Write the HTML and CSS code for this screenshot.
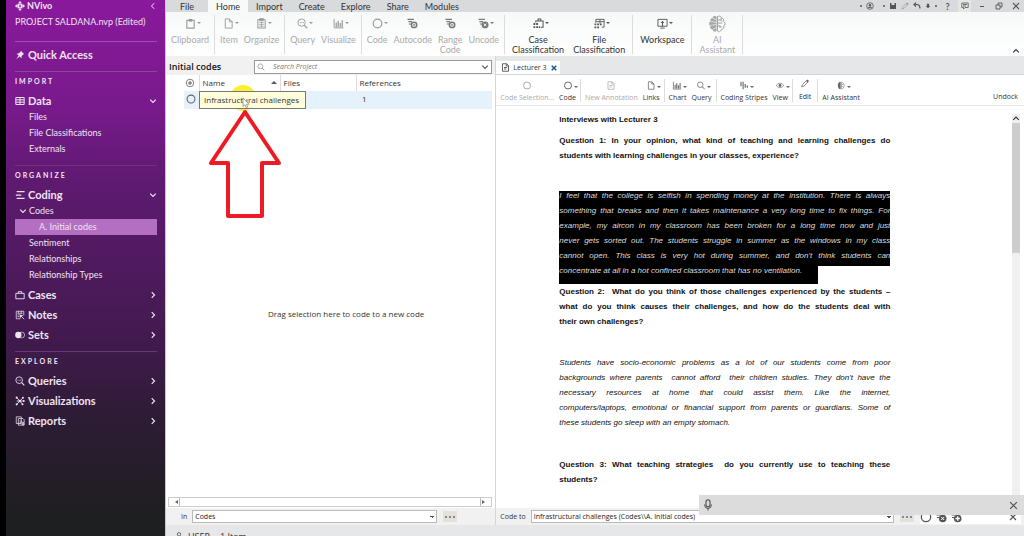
FILE: index.html
```html
<!DOCTYPE html>
<html lang="en">
<head>
<meta charset="utf-8">
<title>NVivo - PROJECT SALDANA</title>
<link rel="stylesheet" href="styles.css">
</head>
<body>
<svg class="defs" aria-hidden="true">
  <symbol id="logo" viewBox="0 0 12 12"><path d="M6 1v3.4M6 7.600V11M1 6h3.400M7.600 6H11M3.200 3.200l5.600 5.600M8.800 3.200L3.200 8.800" stroke="currentColor" stroke-width="1.600"/><path d="M6 0l2 2.300H4zM6 12l2-2.300H4zM0 6l2.300-2v4zM12 6L9.700 4v4z" fill="currentColor"/><circle cx="6" cy="6" r="1.100" fill="#86199a"/></symbol>
  <symbol id="pin" viewBox="0 0 12 12"><path d="M7 1l4 4-1.300.5L8 7.300 7.700 10 5.400 7.800 1.500 11 4.300 6.700 2 4.400 4.800 4 6.500 2.300z" fill="currentColor"/></symbol>
  <symbol id="data" viewBox="0 0 12 12"><path d="M1 1.800h10v8.400H1zM1 4.600h10M1 7.400h10M6 1.800v8.400" fill="none" stroke="currentColor" stroke-width="1.200"/></symbol>
  <symbol id="coding" viewBox="0 0 12 12"><path d="M2 2h9.500M1 6h6.500M2 10h9.500" stroke="currentColor" stroke-width="1.500"/></symbol>
  <symbol id="case" viewBox="0 0 12 12"><path d="M1 4h10v6.500H1zM4 4V2h4v2" fill="none" stroke="currentColor" stroke-width="1.100"/></symbol>
  <symbol id="notes" viewBox="0 0 12 12"><path d="M1.500 1.500h9v5M1.500 1.500v9h5M3 4h6M3 6h4M3 8h2.500M4 1v3M7.500 1v3" fill="none" stroke="currentColor" stroke-width=".9"/><path d="M7 7l4 4M6.500 9V6.500H9z" stroke="currentColor" fill="currentColor"/></symbol>
  <symbol id="sets" viewBox="0 0 12 12"><circle cx="4" cy="6" r="3.800" fill="currentColor"/><circle cx="8" cy="6" r="3.500" fill="none" stroke="currentColor" stroke-width=".8"/></symbol>
  <symbol id="search" viewBox="0 0 12 12"><circle cx="5" cy="5" r="3.700" fill="none" stroke="currentColor"/><path d="M7.700 7.700L11 11" stroke="currentColor" stroke-width="1.300"/></symbol>
  <symbol id="queries" viewBox="0 0 12 12"><circle cx="5" cy="5" r="4" fill="none" stroke="currentColor"/><path d="M8 8l3.200 3.200" stroke="currentColor" stroke-width="1.300"/><path d="M3 5h1M4.700 5h1M6.400 5h1" stroke="currentColor"/></symbol>
  <symbol id="viz" viewBox="0 0 12 12"><path d="M2 2l4 4 3.500-4M6 6l-4 4M6 6h4.500M6 6l3 4M2 6h3" stroke="currentColor" fill="none"/><g fill="currentColor"><circle cx="2" cy="2" r="1.300"/><circle cx="9.500" cy="2" r="1.200"/><circle cx="2" cy="10" r="1.300"/><circle cx="10.500" cy="6" r="1.200"/><circle cx="9" cy="10" r="1.200"/><circle cx="5.800" cy="6" r="1.500"/></g></symbol>
  <symbol id="reports" viewBox="0 0 12 12"><path d="M1.500 1h6v8h-6zM4 3h5.500l1.500 1.500V11H4zM5.500 6h3M5.500 8h2" fill="none" stroke="currentColor" stroke-width=".9"/><path d="M8 7h3v4H8z" fill="currentColor" opacity=".7"/></symbol>
  <symbol id="down" viewBox="0 0 8 8"><path d="M1.200 2.700L4 5.500l2.800-2.800" fill="none" stroke="currentColor" stroke-width="1.200"/></symbol>
  <symbol id="right" viewBox="0 0 8 8"><path d="M2.700 1.200L5.500 4 2.700 6.800" fill="none" stroke="currentColor" stroke-width="1.200"/></symbol>
  <symbol id="left" viewBox="0 0 8 8"><path d="M5.200 1.200L2.500 4l2.700 2.800" fill="none" stroke="currentColor"/></symbol>
  <symbol id="up" viewBox="0 0 8 8"><path d="M1.200 5.300L4 2.500l2.800 2.800" fill="none" stroke="currentColor" stroke-width="1.200"/></symbol>
  <symbol id="clip" viewBox="0 0 12 12"><path d="M2 2.500h8v8.500H2z" fill="none" stroke="currentColor" stroke-width="1.200"/><path d="M4 1h4v3H4z" fill="currentColor"/></symbol>
  <symbol id="page" viewBox="0 0 12 12"><path d="M2.500 1h4.500l3 3v7H2.500zM7 1v3h3" fill="none" stroke="currentColor"/></symbol>
  <symbol id="organize" viewBox="0 0 12 12"><path d="M2 2h8v9H2z" fill="none" stroke="currentColor" stroke-width="1.100"/><path d="M4 .6h4V3H4zM3.500 5h5M3.500 7h5M3.500 9h5M6 4v6" fill="currentColor" stroke="currentColor" stroke-width=".8"/></symbol>
  <symbol id="chart" viewBox="0 0 12 12"><path d="M1.200 1v9.800H11.500" fill="none" stroke="currentColor"/><path d="M3.500 5v5M5.700 3v7M7.900 5.500V10M10.100 2.500V10" stroke="currentColor" stroke-width="1.400"/></symbol>
  <symbol id="ring" viewBox="0 0 12 12"><circle cx="6" cy="6" r="4.700" fill="none" stroke="currentColor" stroke-width="1.300"/></symbol>
  <symbol id="ringdot" viewBox="0 0 12 12"><circle cx="6" cy="6" r="4.500" fill="none" stroke="currentColor"/><path d="M6 3.500v5M3.500 6h5" stroke="currentColor" stroke-width="1.400"/></symbol>
  <symbol id="autocode" viewBox="0 0 12 12"><path d="M.5 1.500h7M1.500 4h4M2 6.500h2.500" stroke="currentColor" stroke-width="1.200"/><circle cx="7.700" cy="7.500" r="2.900" fill="none" stroke="currentColor" stroke-width="1.700"/><path d="M7 6l2.200 1.500L7 9z" fill="currentColor"/></symbol>
  <symbol id="uncode" viewBox="0 0 12 12"><path d="M.5 1.500h7M1.500 4h4M2 6.500h2.500" stroke="currentColor" stroke-width="1.200"/><circle cx="7.700" cy="7.500" r="3.800" fill="currentColor"/><path d="M6.200 6l3 3M9.200 6l-3 3" stroke="#fff"/></symbol>
  <symbol id="addcode" viewBox="0 0 12 12"><path d="M.5 1.500h7M1.500 4h4M2 6.500h2.500" stroke="currentColor" stroke-width="1.200"/><circle cx="7.700" cy="7.500" r="3.800" fill="currentColor"/><path d="M7.700 5.300v4.400M5.500 7.500h4.400" stroke="#fff" stroke-width="1.300"/></symbol>
  <symbol id="casecls" viewBox="0 0 12 12"><path d="M3 5V3.200h8V10H8.500M5.500 3V1.200h3V3" fill="none" stroke="currentColor" stroke-width="1.100"/><path d="M.5 5.500h2v2h-2zM3.500 5.500h2v2h-2zM.5 9h2v2h-2zM3.500 9h2v2h-2zM6.300 9h1.500v2H6.300z" fill="currentColor"/></symbol>
  <symbol id="filecls" viewBox="0 0 12 12"><path d="M2 5V1.500h9V10H8.500M2 4h9M6.500 1.500V6" fill="none" stroke="currentColor"/><path d="M.5 6h2v2h-2zM3.500 6h2v2h-2zM6.400 6h2v2h-2zM.5 9.200h2v2h-2zM3.500 9.200h2v2h-2z" fill="currentColor"/></symbol>
  <symbol id="workspace" viewBox="0 0 12 12"><path d="M1 1.500h10v7.500H1zM3.500 11h5" fill="none" stroke="currentColor"/><path d="M6 3l2 2.500H6.600V9H5.400V5.500H4z" fill="currentColor"/></symbol>
  <symbol id="brain" viewBox="0 0 18 18"><path d="M8.500 1.500C6 .3 4.800 1.500 4.500 3 2.500 3.300 2 5 2.500 6.300.6 7.500.6 10 2.200 11 1.800 13 3 14.500 4.600 14.500 5.300 17 7.600 17.300 8.500 16z" fill="currentColor" opacity=".85"/><path d="M2.500 6.500l6 1M2 10.500l6.500-1M4.500 3l4 2M4.600 14.500l4-2" stroke="#fff" stroke-width=".6"/><path d="M9.500 1.500c2.500-1.200 3.700 0 4 1.500 2 .3 2.500 2 2 3.300 1.900 1.200 1.900 3.700.3 4.700.4 2-.8 3.500-2.400 3.500-.7 2.500-3 2.800-3.900 1.500zM9.500 5h3l1.500 1.500M9.500 8h5M9.500 11h3l1.500 1.500M13 3v2.500M12 13v-2" fill="none" stroke="currentColor" stroke-width=".9"/></symbol>
  <symbol id="doc" viewBox="0 0 12 12"><path d="M2 1h5.500L10 3.500V11H2zM7 1v3h3M4 6h4M4 8h3" fill="none" stroke="currentColor"/></symbol>
  <symbol id="stripes" viewBox="0 0 12 12"><path d="M2 1v6M4.800 1v10M7.600 4v5M10.400 6v3" stroke="currentColor" stroke-width="1.500"/></symbol>
  <symbol id="eye" viewBox="0 0 12 12"><path d="M.8 6Q6-.5 11.200 6 6 12 .8 6z" fill="none" stroke="currentColor" stroke-width=".8"/><circle cx="6" cy="6" r="1.900" fill="currentColor"/></symbol>
  <symbol id="pencil" viewBox="0 0 12 12"><path d="M1.500 10.500l1-3L8 2l2 2-5.500 5.500z" fill="none" stroke="currentColor"/><path d="M7.500 2.500L9.300.7l2 2L9.500 4.500z" fill="currentColor"/></symbol>
  <symbol id="ai" viewBox="0 0 12 12"><path d="M5.500 1C.5 1 .5 11 5.500 11z" fill="currentColor"/><path d="M6.500 1.500c5 0 5 9 0 9zM6.500 4.500H9M6.500 7.500H9" fill="none" stroke="currentColor" stroke-width=".7"/></symbol>
  <symbol id="close" viewBox="0 0 8 8"><path d="M1 1l6 6M7 1L1 7" stroke="currentColor" stroke-width="1.100"/></symbol>
  <symbol id="closebold" viewBox="0 0 8 8"><path d="M1 1l6 6M7 1L1 7" stroke="currentColor" stroke-width="2"/></symbol>
  <symbol id="save" viewBox="0 0 8 8"><path d="M1 1h6v6H1z" fill="currentColor"/><path d="M2.500 1h3v2h-3z" fill="#d9dadc"/></symbol>
  <symbol id="undo" viewBox="0 0 8 8"><path d="M1 2.500h3.500Q7 3 7 6.500M3 .6L1 2.500l2 2" fill="none" stroke="currentColor" stroke-width="1.200"/></symbol>
  <symbol id="arrowdown" viewBox="0 0 8 8"><path d="M2.500 1h3v3H7L4 7 1 4h1.500z" fill="currentColor"/></symbol>
  <symbol id="user" viewBox="0 0 8 8"><circle cx="4" cy="4" r="3.300" fill="none" stroke="currentColor" stroke-width=".8"/><circle cx="4" cy="3.200" r="1.200" fill="currentColor"/><path d="M2 6q2-2 4 0" fill="none" stroke="currentColor"/></symbol>
  <symbol id="comment" viewBox="0 0 8 8"><path d="M.8 1h6.400v4.500H4L2.500 7V5.500H.8zM2 2.500h4M2 4h3" fill="none" stroke="currentColor" stroke-width=".8"/></symbol>
  <symbol id="min" viewBox="0 0 8 8"><path d="M2 4.500h4" stroke="currentColor"/></symbol>
  <symbol id="restore" viewBox="0 0 8 8"><path d="M1 3h4v4H1zM3 3V1h4v4H5" fill="none" stroke="currentColor" stroke-width=".9"/></symbol>
  <symbol id="mic" viewBox="0 0 12 12"><rect x="4" y=".8" width="4" height="7" rx="2" fill="none" stroke="currentColor" stroke-width="1.200"/><path d="M2.500 5.500Q2.500 9.500 6 9.500t3.500-4M6 9.500v2" fill="none" stroke="currentColor"/></symbol>
  <symbol id="person" viewBox="0 0 12 12"><circle cx="6" cy="3.500" r="2.600" fill="none" stroke="currentColor"/><path d="M1.500 12q0-5 4.500-5t4.500 5" fill="none" stroke="currentColor"/></symbol>
</svg>

<div class="app">
  <nav class="sidebar">
    <div class="brand"><svg><use href="#logo"/></svg><span>NVivo</span><button class="collapse" aria-label="Collapse"><svg><use href="#left"/></svg></button></div>
    <div class="project">PROJECT SALDANA.nvp (Edited)</div>
    <a class="head quick" href="#quick"><svg><use href="#pin"/></svg><span>Quick Access</span></a>

    <section>
      <h2>IMPORT</h2>
      <div class="group">
        <a class="head" href="#data"><svg><use href="#data"/></svg><span>Data</span><svg class="chev"><use href="#down"/></svg></a>
        <a class="sub" href="#files">Files</a>
        <a class="sub" href="#fileclass">File Classifications</a>
        <a class="sub" href="#externals">Externals</a>
      </div>
    </section>
    <section>
      <h2>ORGANIZE</h2>
      <div class="group">
        <a class="head" href="#coding"><svg><use href="#coding"/></svg><span>Coding</span><svg class="chev"><use href="#down"/></svg></a>
        <a class="sub open" href="#codes"><svg><use href="#down"/></svg>Codes</a>
        <a class="sub current" href="#initial">A. Initial codes</a>
        <a class="sub" href="#sentiment">Sentiment</a>
        <a class="sub" href="#relationships">Relationships</a>
        <a class="sub" href="#reltypes">Relationship Types</a>
      </div>
      <div class="group"><a class="head" href="#cases"><svg><use href="#case"/></svg><span>Cases</span><svg class="chev"><use href="#right"/></svg></a></div>
      <div class="group"><a class="head" href="#notes"><svg><use href="#notes"/></svg><span>Notes</span><svg class="chev"><use href="#right"/></svg></a></div>
      <div class="group"><a class="head" href="#sets"><svg><use href="#sets"/></svg><span>Sets</span><svg class="chev"><use href="#right"/></svg></a></div>
    </section>
    <section>
      <h2>EXPLORE</h2>
      <div class="group"><a class="head" href="#queries"><svg><use href="#queries"/></svg><span>Queries</span><svg class="chev"><use href="#right"/></svg></a></div>
      <div class="group"><a class="head" href="#viz"><svg><use href="#viz"/></svg><span>Visualizations</span><svg class="chev"><use href="#right"/></svg></a></div>
      <div class="group"><a class="head" href="#reports"><svg><use href="#reports"/></svg><span>Reports</span><svg class="chev"><use href="#right"/></svg></a></div>
    </section>
  </nav>

  <main class="main">
    <header class="tabs">
      <button class="file">File</button><button class="active">Home</button><button>Import</button><button>Create</button><button>Explore</button><button>Share</button><button>Modules</button>
      <div class="window">
        <i class="dot"></i><svg><use href="#user"/></svg><i class="dot wide"></i><svg><use href="#save"/></svg><svg class="faint"><use href="#pencil"/></svg><svg><use href="#undo"/></svg><svg class="slim"><use href="#arrowdown"/></svg><i class="dot"></i>
        <button class="help" aria-label="Help">?</button><button class="note" aria-label="Feedback"><svg><use href="#comment"/></svg></button><button aria-label="Minimize"><svg><use href="#min"/></svg></button><button aria-label="Restore"><svg><use href="#restore"/></svg></button><button aria-label="Close"><svg><use href="#close"/></svg></button>
      </div>
    </header>

    <div class="ribbon">
      <div class="rgroup"><button class="off"><span class="ic drop"><svg><use href="#clip"/></svg></span>Clipboard</button></div>
      <div class="rgroup"><button class="off"><span class="ic drop"><svg><use href="#page"/></svg></span>Item</button><button class="off"><span class="ic drop"><svg><use href="#organize"/></svg></span>Organize</button></div>
      <div class="rgroup"><button class="off"><span class="ic drop"><svg><use href="#queries"/></svg></span>Query</button><button class="off"><span class="ic drop"><svg><use href="#chart"/></svg></span>Visualize</button></div>
      <div class="rgroup"><button class="off"><span class="ic drop"><svg><use href="#ring"/></svg></span>Code</button><button class="off dim"><span class="ic"><svg><use href="#autocode"/></svg></span>Autocode</button><button class="off dim"><span class="ic"><svg><use href="#autocode"/></svg></span>Range<br>Code</button><button class="off dim"><span class="ic drop"><svg><use href="#uncode"/></svg></span>Uncode</button></div>
      <div class="rgroup roomy"><button><span class="ic drop"><svg><use href="#casecls"/></svg></span>Case<br>Classification</button><button><span class="ic drop"><svg><use href="#filecls"/></svg></span>File<br>Classification</button></div>
      <div class="rgroup roomy"><button><span class="ic drop"><svg><use href="#workspace"/></svg></span>Workspace</button></div>
      <div class="rgroup roomy"><button class="off"><span class="ic big"><svg><use href="#brain"/></svg></span>AI<br>Assistant</button></div>
      <button class="fold" aria-label="Collapse ribbon"><svg><use href="#up"/></svg></button>
    </div>

    <div class="panes">
      <section class="list">
        <div class="listhead">
          <h1>Initial codes</h1>
          <div class="search"><svg><use href="#search"/></svg><input type="text" aria-label="Search Project" placeholder="Search Project"><svg class="open-list"><use href="#down"/></svg></div>
        </div>
        <div class="listbody">
          <table>
            <colgroup><col class="c1"><col class="c2"><col class="c3"><col></colgroup>
            <thead><tr><th><svg><use href="#ringdot"/></svg></th><th><span class="sort">Name</span></th><th>Files</th><th>References</th></tr></thead>
            <tbody><tr><td><svg><use href="#ring"/></svg></td><td class="cell"><span class="halo"></span><span class="tip">Infrastructural challenges</span><svg class="cursor" viewBox="0 0 8 12"><path d="M1 1v8.500l2-1.800 1.200 3 1.500-.7-1.200-2.800H7z" fill="#fff" stroke="#888" stroke-width=".8"/></svg></td><td></td><td class="num">1</td></tr></tbody>
          </table>
          <svg class="pointer" viewBox="0 0 74 110"><path d="M37 3L3 54H20V107H54V54H71z" fill="none" stroke="#ed1c24" stroke-width="4" stroke-linejoin="round"/></svg>
          <p class="hint">Drag selection here to code to a new code</p>
        </div>
        <div class="hscroll"><i class="prev"></i><span></span><i class="next"></i></div>
        <div class="codebar"><label for="in">In</label><select id="in"><option>Codes</option></select><button class="more" aria-label="Browse"><i></i><i></i><i></i></button></div>
      </section>

      <section class="detail">
        <div class="doctabs"><button class="doctab"><svg><use href="#doc"/></svg><span>Lecturer 3</span><svg class="x"><use href="#closebold"/></svg></button></div>
        <div class="tools">
          <div class="tgroup"><button class="off"><span class="ic"><svg><use href="#ring"/></svg></span>Code Selection...</button><button><span class="ic drop"><svg><use href="#ring"/></svg></span>Code</button></div>
          <div class="tgroup"><button class="off"><span class="ic"><svg><use href="#doc"/></svg></span>New Annotation</button><button><span class="ic drop"><svg><use href="#page"/></svg></span>Links</button></div>
          <div class="tgroup"><button><span class="ic drop"><svg><use href="#chart"/></svg></span>Chart</button><button><span class="ic drop"><svg><use href="#search"/></svg></span>Query</button></div>
          <div class="tgroup"><button><span class="ic drop"><svg><use href="#stripes"/></svg></span>Coding Stripes</button><button><span class="ic drop"><svg><use href="#eye"/></svg></span>View</button></div>
          <div class="tgroup edit"><button><span class="ic"><svg><use href="#pencil"/></svg></span>Edit</button></div>
          <div class="tgroup"><button><span class="ic drop"><svg><use href="#ai"/></svg></span>AI Assistant</button></div>
          <button class="undock">Undock</button>
        </div>
        <div class="reader">
          <article class="doc">
            <p class="q title">Interviews with Lecturer 3</p>
            <p class="q"><span class="ln">Question 1: In your opinion, what kind of teaching and learning challenges do</span> <span>students with learning challenges in your classes, experience?</span></p>
            <p class="a picked"><span class="ln">I feel that the college is selfish in spending money at the institution. There is always</span> <span class="ln">something that breaks and then it takes maintenance a very long time to fix things. For</span> <span class="ln">example, my aircon in my classroom has been broken for a long time now and just</span> <span class="ln">never gets sorted out. The students struggle in summer as the windows in my class</span> <span class="ln">cannot open. This class is very hot during summer, and don't think students can</span> <span class="end">concentrate at all in a hot confined classroom that has no ventilation.</span></p>
            <p class="q"><span class="ln">Question 2:&nbsp; What do you think of those challenges experienced by the students –</span> <span class="ln">what do you think causes their challenges, and how do the students deal with</span> <span>their own challenges?</span></p>
            <p class="a"><span class="ln">Students have socio-economic problems as a lot of our students come from poor</span> <span class="ln">backgrounds where parents&nbsp; cannot afford&nbsp; their children studies. They don't have the</span> <span class="ln">necessary resources at home that could assist them. Like the internet,</span> <span class="ln">computers/laptops, emotional or financial support from parents or guardians. Some of</span> <span>these students go sleep with an empty stomach.</span></p>
            <p class="q"><span class="ln">Question 3: What teaching strategies&nbsp; do you currently use to teaching these</span> <span>students?</span></p>
          </article>
          <div class="vscroll"><svg><use href="#up"/></svg><i></i><svg class="bottom"><use href="#down"/></svg></div>
        </div>
        <div class="codebar right"><label for="codeto">Code to</label><select id="codeto"><option>Infrastructural challenges (Codes\\A. Initial codes)</option></select><button class="more" aria-label="Browse codes"><i></i><i></i><i></i></button><div class="acts"><button aria-label="Code"><svg><use href="#ring"/></svg></button><button aria-label="Uncode"><svg><use href="#uncode"/></svg></button><button aria-label="Add code"><svg><use href="#addcode"/></svg></button><button class="end" aria-label="Close code bar"><svg><use href="#close"/></svg></button></div></div>
      </section>
    </div>
    <footer class="status"><svg><use href="#person"/></svg><span>USER</span><span>1 Item</span></footer>
  </main>
  <div class="voice"><svg><use href="#mic"/></svg><button aria-label="Dismiss"><svg><use href="#close"/></svg></button></div>
</div>
</body>
</html>
```
FILE: styles.css
```css
* { box-sizing: border-box; }
body { margin: 0; font-family: Lato, sans-serif; font-size: 9px; color: #333; background: #000; }
h1, h2, p { margin: 0; }
button { margin: 0; padding: 0; border: 0; background: none; font: inherit; color: inherit; }
a { color: inherit; text-decoration: none; }
svg { display: block; flex: none; }
.defs { position: absolute; width: 0; height: 0; }
.app { position: relative; display: flex; height: 100vh; padding-left: 6px; overflow: hidden; }

/* Navigation */
.sidebar { flex: none; width: 160px; padding: 0 8px 0 9px; border-right: 1px solid #cfc3d3; color: #efe3f2; background: linear-gradient(#8a199c, #781a8b 20%, #5e1a70 34%, #431a50 62%, #2d1c34 78%, #1e1f20 96%); }
.brand { display: flex; align-items: center; height: 12px; gap: 2px; font-weight: 700; line-height: 12px; }
.brand svg { width: 10px; height: 10px; }
.collapse { margin-left: auto; }
.brand .collapse svg { width: 8px; height: 8px; }
.project { height: 30px; line-height: 20px; white-space: nowrap; border-bottom: 1px solid #a04db0; margin-bottom: 5px; }
.head { display: flex; align-items: center; gap: 3px; height: 16px; font-size: 11px; font-weight: 700; line-height: 16px; }
.head svg { width: 10px; height: 10px; }
.head .chev { width: 8px; height: 8px; margin-left: auto; }
.quick { margin-bottom: 8px; }
.sidebar section { border-top: 1px solid #8a489a; padding: 4px 0 6px; }
.sidebar section + section { border-color: #6b3579; }
.sidebar h2 { margin-bottom: 5px; font-size: 7px; line-height: 10px; font-weight: 700; letter-spacing: 2px; }
.group { padding: 2px 0; }
.sub { display: block; height: 16px; padding-left: 14px; line-height: 16px; }
.open { display: flex; align-items: center; padding-left: 4px; gap: 2px; }
.open svg { width: 8px; height: 8px; }
.current { padding-left: 24px; background: #b46fc3; }

/* Menu tabs and ribbon */
.main { flex: 1; min-width: 0; display: flex; flex-direction: column; background: #fff; }
.tabs { flex: none; display: flex; height: 12px; background: #d9dadc; }
.tabs > button { padding: 0 8px; line-height: 11px; }
.tabs > .file { padding: 0 14px; }
.tabs > .active { background: #f8f9f9; }
.window { display: flex; align-items: center; margin-left: auto; padding-right: 2px; gap: 4px; color: #555; }
.window svg { width: 8px; height: 8px; }
.window .faint { opacity: .5; }
.window .slim { width: 6px; }
.window button { width: 13px; height: 12px; display: flex; align-items: center; justify-content: center; font-weight: 700; }
.window .note { background: #e6e7e4; }
.dot { width: 2px; height: 2px; background: #777; }
.wide { margin-left: 5px; }
.ribbon { flex: none; display: flex; height: 44px; background: linear-gradient(#f7f8f8, #fff); }
.rgroup { display: flex; gap: 6px; margin: 3px 0 2px; padding: 0 5px; border-right: 1px solid #dcdcdc; }
.rgroup button { display: flex; flex-direction: column; align-items: center; line-height: 10px; text-align: center; }
.rgroup.roomy { padding: 0 7px; gap: 9px; }
.ic { position: relative; display: block; padding: 3px 0 6px; color: #555; }
.ic svg { width: 11px; height: 11px; }
.drop::after { content: ""; position: absolute; right: -5px; top: 7px; border: 2px solid transparent; border-top-color: currentColor; border-bottom: 0; }
.ribbon .off { color: #aaa; }
.ribbon .off .ic { color: #999; }
.ribbon .dim .ic { color: #777; }
.ribbon .big { padding: 0 0 2px; }
.ribbon .big svg { width: 18px; height: 18px; }
.fold { margin: auto 4px 0 auto; }
.fold svg { width: 8px; height: 10px; }

/* Panes */
.panes { flex: 1; min-height: 0; display: flex; font-family: "Open Sans", "Noto Sans", sans-serif; font-size: 8px; }
.list { flex: 0 0 38.5%; display: flex; flex-direction: column; border-right: 1px solid #d5d5d5; }
.listhead { display: flex; align-items: center; height: 19px; padding: 2px 3px 0; background: #f1f1f2; }
.listhead h1 { width: 85px; font-size: 9px; line-height: 14px; font-weight: 600; color: #111; }
.search { flex: 1; display: flex; align-items: center; height: 14px; padding: 0 2px; background: #fff; border: 1px solid #999; }
.search svg { width: 8px; height: 8px; color: #888; }
.search .open-list { color: #555; }
.search input { flex: 1; min-width: 0; padding: 0 0 0 8px; border: 0; outline: 0; background: none; font: italic 7px/10px "Open Sans", sans-serif; }
.search input::placeholder { color: #777; }
.listbody { position: relative; flex: 1; display: flex; flex-direction: column; padding-left: 18px; padding-right: 3px; }
table { width: 100%; border-collapse: collapse; table-layout: fixed; line-height: 12px; }
th { height: 16px; padding: 0 0 1px 3px; text-align: left; font-weight: 400; border-left: 1px solid #ddd; }
th:first-child { border-left: 0; }
td { height: 18px; padding: 0 0 2px; background: #e5f1fb; }
td svg, th svg { width: 10px; height: 10px; color: #666; }
td > svg { margin-left: 1px; }
th:first-child, td:first-child { padding-left: 1px; }
.c1 { width: 15px; } .c2 { width: 81px; } .c3 { width: 76px; }
.sort { display: flex; align-items: center; justify-content: space-between; padding-right: 3px; }
.sort::after { content: ""; border: 3px solid transparent; border-top: 0; border-bottom-color: #555; }
td.num { padding-left: 6px; }
.cell { position: relative; }
.halo { position: absolute; left: 31px; top: -6px; width: 26px; height: 26px; border-radius: 50%; background: #fbf02f; }
.tip { position: absolute; left: 0; top: 0; height: 18px; padding: 0 6px 0 4px; line-height: 16px; white-space: nowrap; background: #fffedb; border: 1px solid #777; }
.cell .cursor { position: absolute; left: 42px; top: 6px; width: 8px; height: 12px; }
.pointer { position: absolute; left: 42px; top: 34px; width: 74px; height: 110px; }
.hint { margin: auto; padding: 22px 0 0 16px; line-height: 12px; }
.hscroll { display: flex; align-items: stretch; height: 10px; margin: 0 3px 1px 2px; border: 1px solid #ccc; }
.hscroll span { flex: 1; margin: 0 1px; border: solid #bbb; border-width: 0 1px; }
.hscroll i { width: 9px; margin: 2px 0; border: 2px solid transparent; border-left-width: 3px; border-right-width: 3px; }
.hscroll .prev { border-right-color: #666; }
.hscroll .next { border-left-color: #666; }
.codebar { display: flex; align-items: center; height: 17px; background: #f1f1f1; padding-left: 15px; font-size: 7px; }
.codebar label { margin-right: 5px; }
.codebar select { flex: 1; min-width: 0; height: 13px; padding: 0 2px; border: 1px solid #bbb; border-radius: 0; appearance: none; font: 7px/11px "Open Sans", sans-serif; color: #222; background: conic-gradient(from -45deg at 50% 100%, #555 90deg, transparent 0) right 2px center / 4px 2px no-repeat #fff; }
.more { display: flex; align-items: center; justify-content: center; gap: 2px; width: 14px; height: 11px; margin: 0 38px 0 6px; background: #e2e1dc; }
.more i { width: 2px; height: 2px; background: #888; }
.codebar.right { padding-left: 4px; }
.right .more { margin-right: 6px; }
.acts { display: flex; align-items: center; gap: 3px; width: 101px; height: 15px; margin-right: 3px; background: #fff; color: #555; }
.acts svg { width: 12px; height: 12px; }
.acts .end { margin: 0 4px 0 auto; }
.acts .end svg { width: 8px; height: 8px; }

.detail { flex: 1; min-width: 0; display: flex; flex-direction: column; }
.doctabs { display: flex; align-items: flex-end; height: 19px; background: #e6e7e9; border-bottom: 1px solid #d5d5d5; }
.doctab { display: flex; align-items: center; gap: 3px; height: 13px; padding: 0 3px 0 5px; background: #fff; font-size: 7px; }
.doctab svg { width: 9px; height: 9px; }
.doctab .x { width: 6px; height: 6px; color: #175a94; margin-left: 1px; }
.tools { display: flex; height: 31px; padding-right: 6px; font-size: 7px; border-bottom: 1px solid #e4e4e4; }
.tgroup { display: flex; gap: 5px; margin: 4px 0 3px; padding: 0 4px; border-right: 1px solid #ddd; }
.tgroup:nth-last-child(2) { border-right: 0; }
.tgroup button { display: flex; flex-direction: column; align-items: center; line-height: 10px; white-space: nowrap; }
.tgroup .ic { padding: 2px 0 3px; color: #666; }
.tgroup .ic svg { width: 10px; height: 9px; }
.tgroup .off, .tgroup .off .ic { color: #aaa; }
.tgroup.edit { padding: 0 6px; }
.edit .ic { padding: 0 0 4px; }
.undock { margin: 14px 0 0 auto; align-self: flex-start; line-height: 16px; }
.reader { flex: 1; min-height: 0; display: flex; justify-content: space-between; }
.doc { flex: 0 1 394px; padding: 6px 0 0 63px; font: 8px/15px "Liberation Sans", Arial, sans-serif; color: #111; }
.doc span { display: block; white-space: nowrap; }
.doc .ln { text-align-last: justify; }
.q { font-weight: 700; margin-bottom: 28px; }
.doc .title { margin-bottom: 6px; }
.a { font-style: italic; margin-bottom: 27px; }
.doc .picked { margin-bottom: 0; color: #ddd; line-height: 9px; }
.picked .ln { padding-bottom: 6px; background: #000; }
.picked .end { width: 78%; padding-bottom: 9px; background: #000; }
.picked + .q { margin-bottom: 26px; }
.vscroll { display: flex; flex-direction: column; align-items: center; width: 8px; margin: 8px 4px 0 0; background: #f0f0f0; }
.vscroll svg { width: 8px; height: 9px; }
.vscroll i { width: 8px; height: 33%; background: #cdcdcd; }
.vscroll .bottom { margin-top: auto; }

.status { flex: none; display: flex; gap: 10px; height: 11px; padding: 7px 0 0 9px; overflow: hidden; background: #e6e7e9; font: 9px/10px "Open Sans", sans-serif; }
.status svg { width: 8px; height: 8px; margin-right: -5px; }
.voice { position: absolute; right: 0; bottom: 21px; display: flex; align-items: center; justify-content: space-between; width: 325px; height: 20px; padding: 0 6px 0 3px; background: #dcdcdc; color: #555; }
.voice svg { width: 12px; height: 12px; }
.voice button svg { width: 9px; height: 9px; }
```
